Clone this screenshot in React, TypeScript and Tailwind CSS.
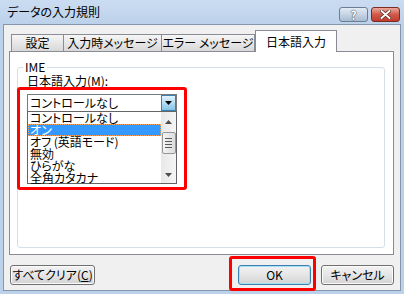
import React from "react";

const font = "font-['Noto_Sans_CJK_JP','Noto_Sans',sans-serif] [font-feature-settings:'palt']";

const Tab = ({ label, width, selected }: { label: string; width: string; selected?: boolean }) =>
  selected ? (
    <div
      className={`${width} relative z-10 -mb-px h-[22px] border border-b-0 border-[#898c95] bg-white flex items-center justify-center text-[12px] text-black`}
    >
      {label}
    </div>
  ) : (
    <div
      className={`${width} h-[17px] border border-b-0 border-[#898c95] -ml-px first:ml-0 bg-gradient-to-b from-[#f6f6f6] to-[#d8d8d8] flex items-center justify-center text-[12px] text-black`}
    >
      {label}
    </div>
  );

const Button = ({ label, width, focused }: { label: React.ReactNode; width: string; focused?: boolean }) => (
  <div
    className={`${width} h-[20px] rounded-[3px] border ${
      focused ? "border-[#3c7fb1] shadow-[inset_0_0_0_1px_#a8dff6]" : "border-[#707070] shadow-[inset_0_0_0_1px_#fbfbfb]"
    } bg-gradient-to-b from-[#f2f2f2] via-[#e6e6e6] to-[#d2d2d2] flex items-center justify-center text-[12px] text-black`}
  >
    {label}
  </div>
);

const items = ["コントロールなし", "オン", "オフ (英語モード)", "無効", "ひらがな", "全角カタカナ"];

export default function App() {
  return (
    <div className={`${font} relative w-[404px] h-[294px] bg-[#bcd2ea] flex flex-col overflow-hidden`}>
      {/* title bar */}
      <div className="h-[24px] shrink-0 bg-gradient-to-b from-[#cadcf1] to-[#bcd2ea] flex items-center pl-[7px] pr-[4px]">
        <span className="text-[12px] text-black leading-none">データの入力規則</span>
        <div className="ml-auto flex gap-[3px] self-start mt-[7px]">
          <div className="w-[29px] h-[15px] rounded-[3px] border border-[#6d7d93] bg-gradient-to-b from-[#e2ebf5] to-[#a9bcd3] flex items-center justify-center text-[12px] font-bold text-white leading-none [text-shadow:0_0_1px_#333,0_0_1px_#333]">
            ?
          </div>
          <div className="w-[29px] h-[15px] rounded-[3px] border border-[#7d2b22] bg-gradient-to-b from-[#e9a89c] via-[#d0594a] to-[#c23b2c] flex items-center justify-center">
            <svg width="11" height="9" viewBox="0 0 11 9">
              <path d="M1.5 1 L9.5 8 M9.5 1 L1.5 8" stroke="#4a1a14" strokeWidth="3.2" strokeLinecap="round" />
              <path d="M1.5 1 L9.5 8 M9.5 1 L1.5 8" stroke="#ffffff" strokeWidth="2" strokeLinecap="round" />
            </svg>
          </div>
        </div>
      </div>

      {/* client area */}
      <div className="flex-1 mx-[3px] mb-[3px] border border-[#8596ab] bg-[#f0f0f0] flex flex-col">
        <div className="h-[26px] flex items-end pl-[7px] shrink-0">
          <Tab label="設定" width="w-[53px]" />
          <Tab label="入力時メッセージ" width="w-[99px]" />
          <Tab label="エラー メッセージ" width="w-[94px]" />
          <Tab label="日本語入力" width="w-[82px]" selected />
        </div>

        <div className="ml-[5px] w-[385px] h-[204px] border border-[#898c95] bg-white shrink-0">
          <div className="relative mt-[15px] ml-[7px] w-[368px] h-[181px] border border-[#d5dfe5] rounded-[3px]">
            <span className="absolute -top-[8px] left-[5px] px-[2px] bg-white text-[12px] leading-[14px] text-black">
              IME
            </span>
            <div className="mt-[6px] ml-[9px] text-[12px] leading-[14px] text-black">日本語入力(M):</div>

            {/* combo */}
            <div className="mt-[6px] ml-[9px] w-[150px] h-[18px] border border-[#7a7a7a] bg-white flex">
              <div className="flex-1 pl-[2px] text-[12px] leading-[16px] text-black">コントロールなし</div>
              <div className="w-[15px] h-full border border-[#3c7fb1] bg-gradient-to-b from-[#e3f3fc] via-[#b5dcf3] to-[#86c3e8] flex items-center justify-center">
                <svg width="7" height="4" viewBox="0 0 7 4">
                  <path d="M0 0 H7 L3.5 4 Z" fill="#000" />
                </svg>
              </div>
            </div>

            {/* list */}
            <div className="-mt-px ml-[9px] w-[150px] h-[73px] border border-[#646464] bg-white flex">
              <div className="flex-1 flex flex-col">
                {items.map((it, i) => (
                  <div
                    key={it}
                    className={`h-[12px] pl-[2px] text-[12px] leading-[12px] whitespace-nowrap ${
                      i === 1
                        ? "bg-[#3399ff] text-white outline outline-1 outline-dotted outline-[#f4a460] -outline-offset-1"
                        : "text-black"
                    }`}
                  >
                    {it}
                  </div>
                ))}
              </div>
              <div className="w-[15px] h-full bg-gradient-to-r from-[#e8e8e8] to-[#f5f5f5] flex flex-col items-center">
                <div className="h-[15px] flex items-center justify-center mt-[2px]">
                  <svg width="7" height="4" viewBox="0 0 7 4">
                    <path d="M3.5 0 L7 4 H0 Z" fill="#4d4d4d" />
                  </svg>
                </div>
                <div className="mt-[3px] w-[14px] h-[22px] rounded-[2px] border border-[#979797] bg-gradient-to-r from-[#f4f4f4] to-[#dcdcdc] flex flex-col items-center justify-center gap-[2px]">
                  <div className="w-[7px] h-px bg-[#5a5a5a]" />
                  <div className="w-[7px] h-px bg-[#5a5a5a]" />
                  <div className="w-[7px] h-px bg-[#5a5a5a]" />
                  <div className="w-[7px] h-px bg-[#5a5a5a]" />
                </div>
                <div className="mt-auto mb-[2px] h-[12px] flex items-center justify-center">
                  <svg width="7" height="4" viewBox="0 0 7 4">
                    <path d="M0 0 H7 L3.5 4 Z" fill="#4d4d4d" />
                  </svg>
                </div>
              </div>
            </div>
          </div>
        </div>

        <div className="mt-[10px] flex items-center pl-[6px] pr-[6px]">
          <Button
            width="w-[85px]"
            label={
              <span>
                すべてクリア(<span className="underline">C</span>)
              </span>
            }
          />
          <div className="flex-1" />
          <Button width="w-[73px]" label="OK" focused />
          <div className="w-[10px]" />
          <Button width="w-[73px]" label="キャンセル" />
        </div>
      </div>

      {/* red highlight annotations */}
      <div className="absolute left-[17px] top-[87px] w-[170px] h-[103px] border-[3px] border-[#ff0000] rounded-[3px] pointer-events-none" />
      <div className="absolute left-[229px] top-[256px] w-[87px] h-[35px] border-[3px] border-[#ff0000] rounded-[3px] pointer-events-none" />
    </div>
  );
}
